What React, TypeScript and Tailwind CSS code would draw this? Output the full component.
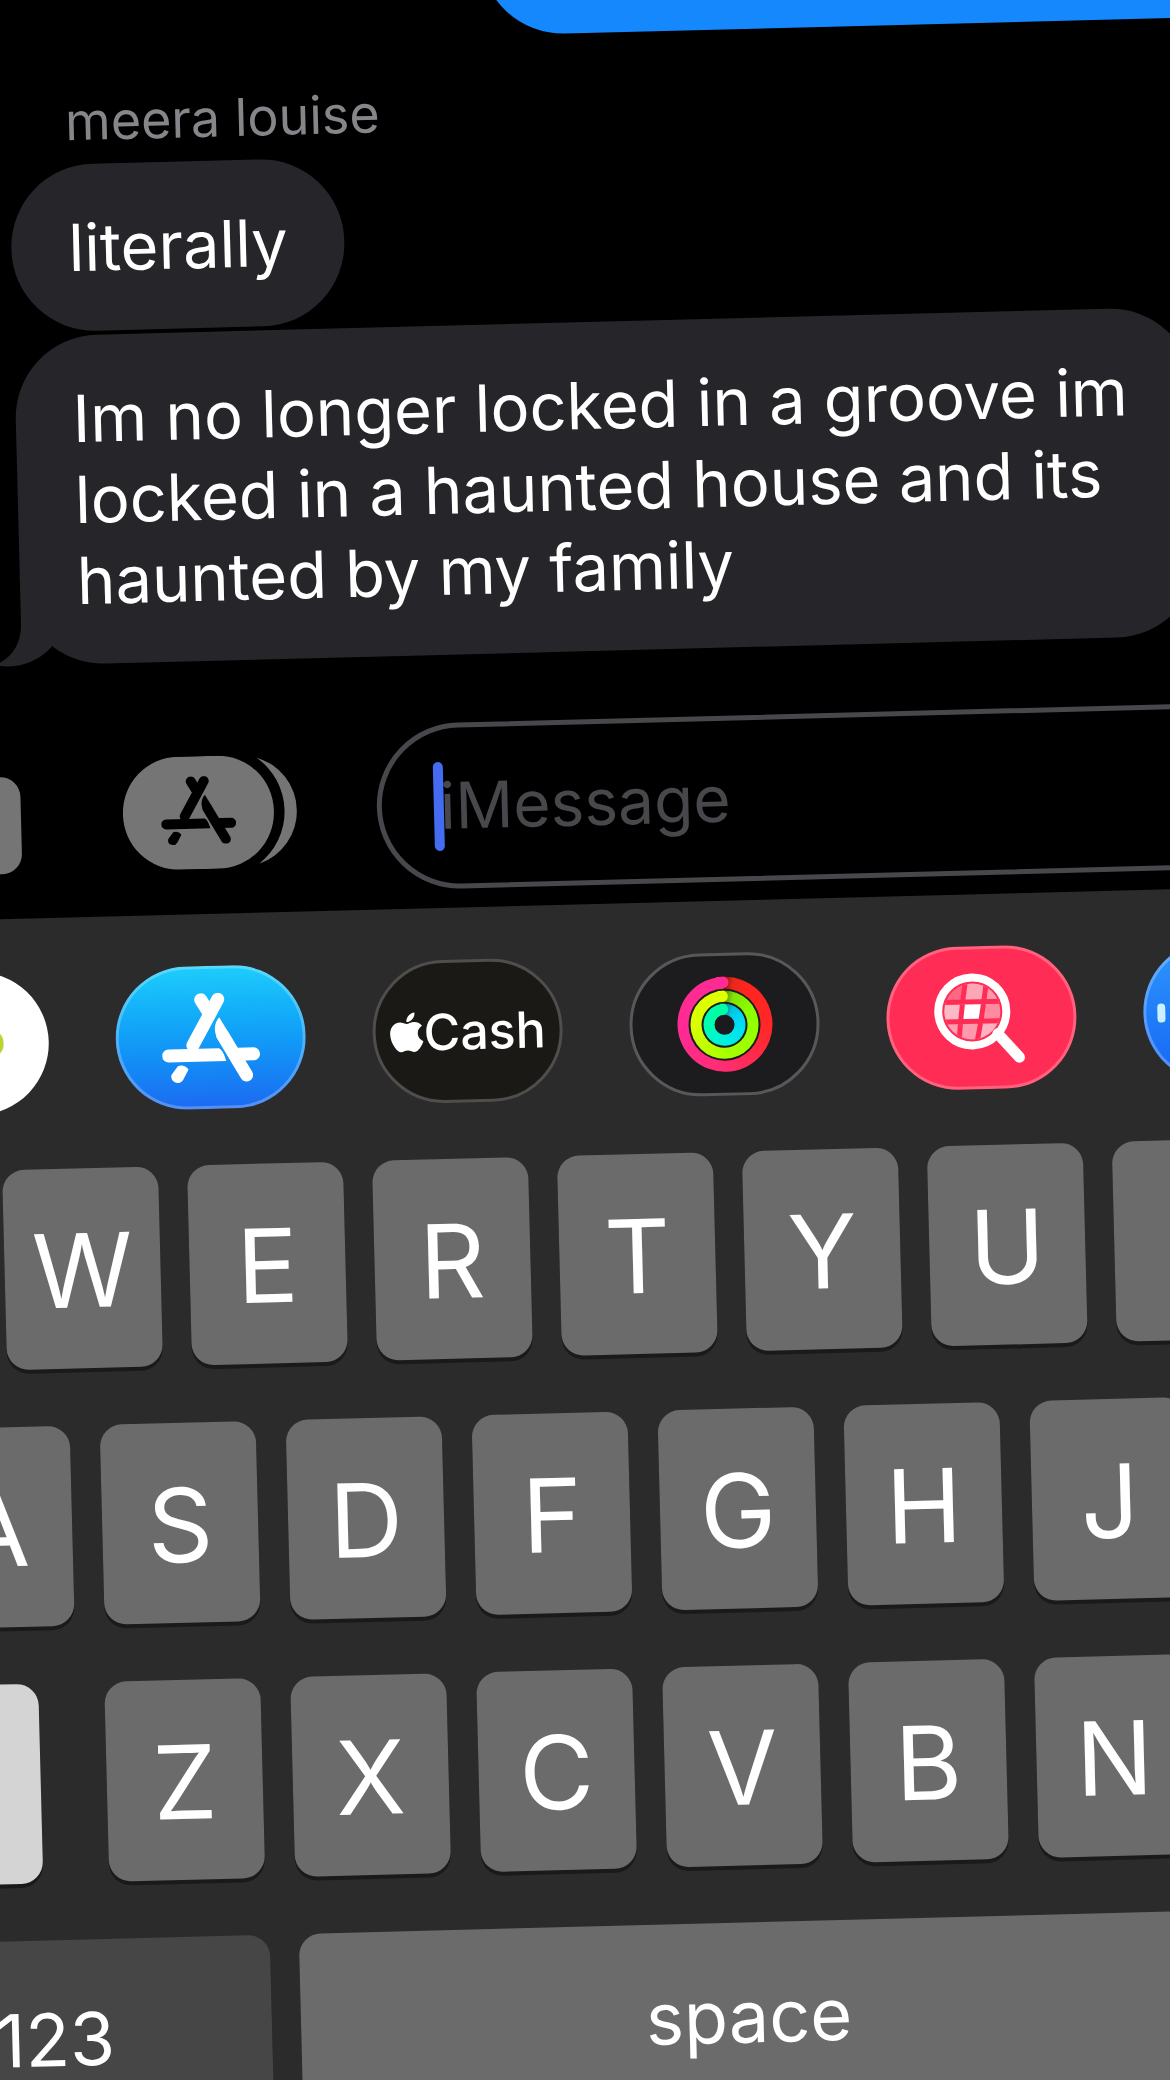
import type { ReactNode } from "react";
import { FaApple } from "react-icons/fa";

function AppStoreGlyph({ className }: { className: string }) {
  return (
    <svg viewBox="0 0 98 90" className={className} aria-hidden="true">
      <g stroke="currentColor" strokeWidth="13" strokeLinecap="round" fill="none">
        <path d="M57 6.5 L31 52" />
        <path d="M40 6.5 L48 20" />
        <path d="M61 42.5 L84 83" />
        <path d="M76 62 H91.5" />
      </g>
      <g fill="currentColor">
        <path d="M58 24.5 C53 30 52 37 55.4 45.7 L66.6 39.4 Z" />
        <path d="M6.5 55.5 H57 C60 57 62.5 62 64 68.5 H6.5 A6.5 6.5 0 0 1 6.5 55.5 Z" />
        <path d="M15.5 72.5 C19 71 23.5 72 26 76 L20.5 86 A6.4 6.4 0 0 1 8.8 81 Z" />
      </g>
    </svg>
  );
}

function Bubble({ children, tail }: { children: ReactNode; tail?: boolean }) {
  return (
    <div className="relative w-fit max-w-[1178px] rounded-[83px] bg-[#262529] px-[57px] py-[43px] text-[65px] leading-[81px] text-white">
      <p>{children}</p>
      {tail && (
        <svg viewBox="-30 -90 80 92" className="absolute -bottom-0.5 -left-[30px] h-[92px] w-20 text-[#262529]" aria-hidden="true">
          <path fill="currentColor" d="M0 -90 V-42 C0 -22 -10 -8 -27 -1 C-8 3 13 -1 30 -18 L50 -90 Z" />
        </svg>
      )}
    </div>
  );
}

function AppPill({ label, className, children }: { label: string; className: string; children?: ReactNode }) {
  return (
    <button
      type="button"
      aria-label={label}
      className={`relative flex h-[143px] w-[190px] shrink-0 items-center justify-center overflow-hidden rounded-full ${className}`}
    >
      {children}
    </button>
  );
}

function PhotosFlower() {
  const petals = ["#f6a623", "#f0d32c", "#b8d435", "#5fb870", "#4fa3d8", "#7a6fc0", "#c466a5", "#ea5f4a"];
  return (
    <svg viewBox="-50 -50 100 100" className="size-[100px] shrink-0" aria-hidden="true">
      {petals.map((color, i) => (
        <rect key={color} x="10" y="-15" width="40" height="30" rx="15" fill={color} transform={`rotate(${i * 45 - 90})`} />
      ))}
    </svg>
  );
}

function ActivityRings() {
  return (
    <div className="relative flex size-[95px] items-center justify-center rounded-full bg-[conic-gradient(#8c1208_0deg,#e8281c_12deg,#ff2420_30deg,#ff2828_100deg,#ff2d6a_170deg,#ff2b92_250deg,#ff2b92_360deg)]">
      <span className="absolute top-0 left-[40px] h-[11px] w-[12px] rounded-r-[5px] bg-[#ff2b92]" />
      <div className="flex size-[72px] items-center justify-center rounded-full bg-[#1b1c1c]">
        <div className="relative flex size-[68px] items-center justify-center rounded-full bg-[conic-gradient(#4c8408_0deg,#84e004_18deg,#8cff00_60deg,#a8ff00_180deg,#d8ff00_270deg,#e0ff00_360deg)]">
          <span className="absolute top-0 left-[28px] h-[11px] w-[10px] rounded-r-[5px] bg-[#e0ff00]" />
          <div className="flex size-[46px] items-center justify-center rounded-full bg-[#1b1c1c]">
            <div className="relative flex size-[42px] items-center justify-center rounded-full bg-[conic-gradient(#087a90_0deg,#00c4e0_28deg,#00d8f8_70deg,#00f0e0_180deg,#00ffb0_270deg,#00ffa0_360deg)]">
              <span className="absolute top-0 left-[17px] h-[11px] w-[8px] rounded-r-[5px] bg-[#00ffa0]" />
              <div className="size-5 rounded-full bg-[#1b1b1f]" />
            </div>
          </div>
        </div>
      </div>
    </div>
  );
}

function ImageSearchGlyph() {
  return (
    <svg viewBox="0 0 190 143" className="absolute inset-0 h-full w-full" aria-hidden="true">
      <defs>
        <clipPath id="lens">
          <circle cx="86" cy="65" r="28" />
        </clipPath>
      </defs>
      <g clipPath="url(#lens)">
        <path fill="#ff6885" d="M50 35 H80 L75 55 H50 Z" />
        <path fill="#ffa6b6" d="M80 35 H101 L97 55 H75 Z" />
        <path fill="#ff98ab" d="M101 35 H120 V55 H97 Z" />
        <path fill="#ffb9c5" d="M50 55 H76 L74 75 H50 Z" />
        <path fill="#ffffff" d="M76 55 H97 L94 75 H73 Z" />
        <path fill="#ff8ba2" d="M97 55 H120 V75 H94 Z" />
        <path fill="#ff9fb1" d="M50 75 H74 L70 95 H50 Z" />
        <path fill="#ff9aad" d="M74 75 H94 L91 95 H70 Z" />
        <path fill="#ffb3c0" d="M94 75 H120 V95 H90 Z" />
        <path stroke="#ff2d55" strokeWidth="5" fill="none" d="M50 55.5 H120 M50 75 H120 M80 34 Q75 62 72 96 M101 34 Q97 64 90 96" />
      </g>
      <circle cx="86" cy="65" r="34" fill="none" stroke="#ffffff" strokeWidth="8" />
      <path d="M111 88 L132 112" stroke="#ffffff" strokeWidth="11" strokeLinecap="round" />
    </svg>
  );
}

const keyBase =
  "flex h-[200px] shrink-0 items-center justify-center rounded-[22px] text-white shadow-[0_4px_0_#1a1a1a]";

function LetterRow({ letters }: { letters: string }) {
  return (
    <>
      {letters.split("").map((letter) => (
        <button key={letter} type="button" className={`${keyBase} w-[156px] bg-[#6b6b6b] pt-1 text-[102px]`}>
          {letter}
        </button>
      ))}
    </>
  );
}

export default function App() {
  return (
    <div className="h-screen overflow-hidden bg-black font-['Inter',sans-serif]">
      <main className="-mr-16 -ml-16 flex origin-[64px_0px] rotate-[-1.47deg] flex-col">
        <div className="-mt-[119px] ml-[545px] h-[167px] rounded-l-[83px] bg-[#1688fe]" aria-label="Sent message" />

        <section className="mt-[46px] ml-[69px] flex flex-col">
          <h2 className="ml-[57px] text-[52px] leading-[60px] text-[#85858a]">meera louise</h2>
          <div className="mt-3 flex flex-col gap-1">
            <Bubble>literally</Bubble>
            <Bubble tail>Im no longer locked in a groove im locked in a haunted house and its haunted by my family</Bubble>
          </div>
        </section>

        <form className="mt-[68px] flex items-center">
          <button type="button" aria-label="Camera" className="mt-4 -ml-[72px] h-[97px] w-[136px] shrink-0 rounded-[20px] bg-[#757575]" />
          <button type="button" aria-label="Apps" className="relative ml-[102px] h-[113px] w-[174px] shrink-0 text-[#757575]">
            <svg viewBox="0 0 174 113" className="h-full w-full" aria-hidden="true">
              <rect width="151" height="113" rx="56" fill="currentColor" />
              <path fill="currentColor" d="M135 3 A55.5 55.5 0 0 1 135 109 A66 66 0 0 0 135 3 Z" />
            </svg>
            <AppStoreGlyph className="absolute top-5 left-[38px] w-[75px] text-black" />
          </button>
          <div className="ml-20 flex h-[166px] flex-1 items-center rounded-full border-5 border-[#48484c] pl-[52px]">
            <span className="z-10 h-[89px] w-[10px] shrink-0 rounded-full bg-[#456bf0]" />
            <input
              type="text"
              aria-label="iMessage"
              placeholder="iMessage"
              className="-ml-1 min-w-0 flex-1 bg-transparent text-[64px] text-white outline-none placeholder:text-[#48484c]"
            />
          </div>
        </form>

        <section className="mt-[19px] bg-[#2b2b2b] pt-[52px] pb-16" aria-label="Keyboard">
          <nav className="-ml-[104px] flex gap-[67px]" aria-label="iMessage apps">
            <AppPill label="Photos" className="bg-white">
              <PhotosFlower />
            </AppPill>
            <AppPill label="App Store" className="border-3 border-white/25 bg-linear-to-b from-[#1fcdfb] to-[#1d69f1] bg-origin-border text-white">
              <AppStoreGlyph className="w-[98px]" />
            </AppPill>
            <AppPill label="Apple Cash" className="border-3 border-[#504e4c] bg-[#1a1916] text-white">
              <FaApple className="h-[45px] w-[34px]" />
              <span className="text-[50px] leading-none font-medium">Cash</span>
            </AppPill>
            <AppPill label="Fitness" className="border-3 border-[#58585b] bg-[#1c1c1f]">
              <ActivityRings />
            </AppPill>
            <AppPill label="#images" className="bg-[#ff2d55] inset-ring-3 inset-ring-white/25">
              <ImageSearchGlyph />
            </AppPill>
            <AppPill label="Music" className="bg-linear-to-b from-[#3096fb] to-[#1763f5] inset-ring-3 inset-ring-white/25">
              <svg viewBox="0 0 190 143" className="absolute inset-0 h-full w-full" aria-hidden="true">
                <path
                  d="M18 66 V77 M32 55 V88 M46 42 V101 M60 58 V85"
                  stroke="#c9f1ff"
                  strokeWidth="8"
                  strokeLinecap="round"
                />
              </svg>
            </AppPill>
          </nav>

          <div className="mt-[56px] flex flex-col gap-[57px]">
            <div className="ml-[36px] flex gap-[29px]">
              <LetterRow letters="WERTYUI" />
            </div>
            <div className="-ml-[59px] flex gap-[30px]">
              <LetterRow letters="ASDFGHJ" />
            </div>
            <div className="-ml-[142px] flex gap-[30px]">
              <button type="button" aria-label="Shift" className={`${keyBase} mr-9 w-[201px] bg-[#d4d4d4]`} />
              <LetterRow letters="ZXCVBN" />
            </div>
            <div className="-ml-[150px] flex gap-[29px]">
              <button type="button" className={`${keyBase} w-[434px] bg-[#464646] text-[73px]`}>
                123
              </button>
              <button type="button" className={`${keyBase} w-[896px] bg-[#6b6b6b] pb-3 text-[72px]`}>
                space
              </button>
            </div>
          </div>
        </section>
      </main>
    </div>
  );
}
